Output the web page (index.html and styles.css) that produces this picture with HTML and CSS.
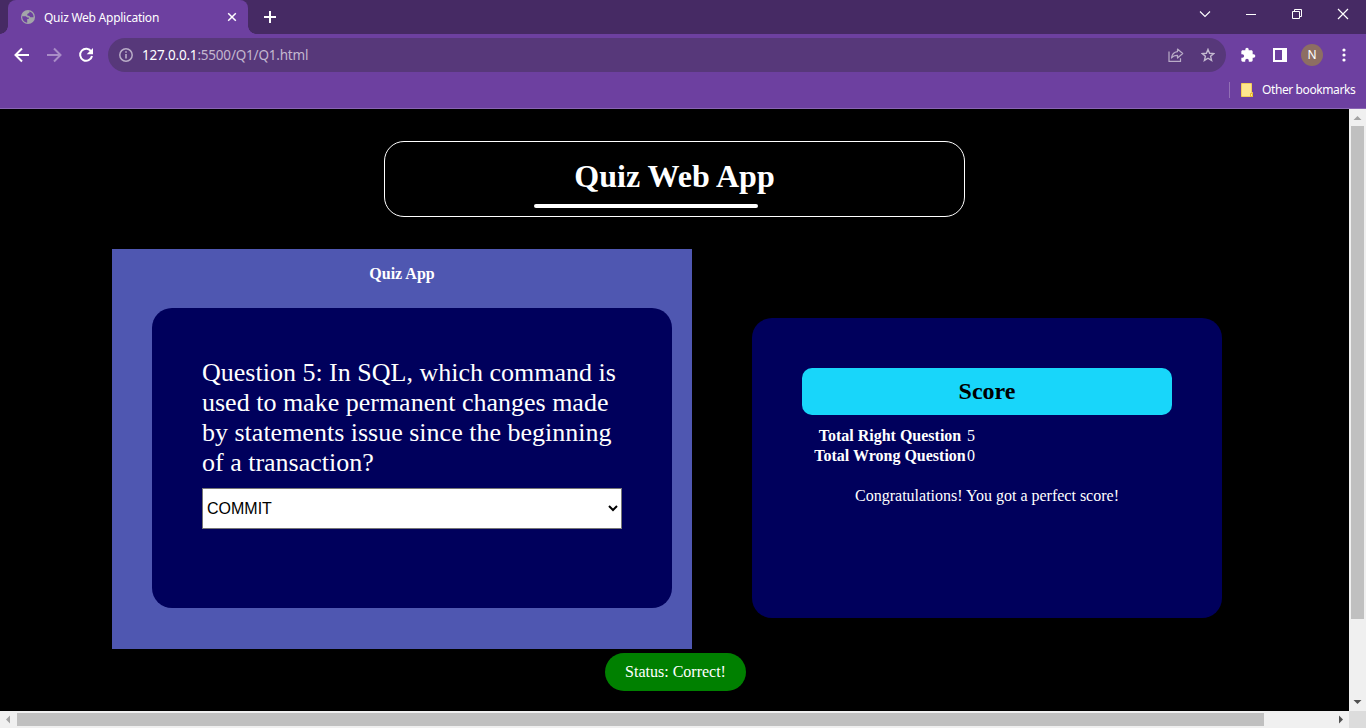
FILE: index.html
```html
<!DOCTYPE html>
<html lang="en">
<head>
<meta charset="utf-8">
<title>Quiz Web Application</title>
<link rel="stylesheet" href="styles.css">
</head>
<body>
<div class="window">
  <header class="browser">
    <div class="tabstrip">
      <div class="tab">
        <svg class="globe" width="14" height="14" viewBox="0 0 14 14"><circle cx="7" cy="7" r="7" fill="#a3a6a9"/><path d="M1.200 6.300h3.600l1.500 1.300h1.500v1.300H6.200v3.900C3.200 12.300 1 9.900 1.200 6.300zM8.400 1.400v1.400L6.300 4v1.500l2 .5 1 1.300h3.300C12.800 4.300 11 2 8.400 1.400z" fill="#6d40a0"/></svg>
        <span class="tab-title">Quiz Web Application</span>
        <svg class="tab-close" width="10" height="10" viewBox="0 0 10 10"><path d="M1.200 1.200l7.600 7.600M8.800 1.200l-7.600 7.600" stroke="#fff" stroke-width="1.500"/></svg>
      </div>
      <svg class="new-tab" width="12" height="12" viewBox="0 0 12 12"><path d="M6 0v12M0 6h12" stroke="#fff" stroke-width="2"/></svg>
      <div class="controls">
        <svg width="12" height="12" viewBox="0 0 12 12"><path d="M1 3.500l5 5 5-5" fill="none" stroke="#fff" stroke-width="1.100"/></svg>
        <svg width="12" height="12" viewBox="0 0 12 12"><path d="M1 6.500h10" stroke="#fff"/></svg>
        <svg width="12" height="12" viewBox="0 0 12 12"><path d="M1.500 3.500h7v7h-7zM3.500 3.500v-2h7v7h-2" fill="none" stroke="#fff"/></svg>
        <svg width="12" height="12" viewBox="0 0 12 12"><path d="M1 1l10 10M11 1L1 11" stroke="#fff" stroke-width="1.200"/></svg>
      </div>
    </div>
    <div class="toolbar">
      <svg class="nav" width="16" height="16" viewBox="0 0 16 16"><path d="M15 8H2M8 1.500L1.500 8 8 14.500" fill="none" stroke="#fff" stroke-width="2"/></svg>
      <svg class="nav" width="16" height="16" viewBox="0 0 16 16"><path d="M1 8h13M8 1.500L14.500 8 8 14.500" fill="none" stroke="#a98cc7" stroke-width="2"/></svg>
      <svg class="nav" width="16" height="16" viewBox="0 0 16 16"><path d="M13.300 4.700A6 6 0 1 0 14 9" fill="none" stroke="#fff" stroke-width="2"/><path d="M15 1v6.300H8.700z" fill="#fff"/></svg>
      <div class="omnibox">
        <svg width="14" height="14" viewBox="0 0 14 14"><circle cx="7" cy="7" r="6.200" fill="none" stroke="#b9acc7" stroke-width="1.500"/><path d="M7 6v4.500M7 3.300v1.500" stroke="#b9acc7" stroke-width="1.600"/></svg>
        <span class="url"><b>127.0.0.1</b>:5500/Q1/Q1.html</span>
        <svg class="share" width="16" height="14" viewBox="0 0 16 14"><path d="M1 3.500v9.800h11.500v-3" fill="none" stroke="#b9acc7" stroke-width="1.200"/><path d="M9.500 1l5.200 4.500L9.500 10V7.300C6.500 7.200 5 8 3.500 10 4 6 6 4 9.500 3.600z" fill="none" stroke="#b9acc7" stroke-width="1.200" stroke-linejoin="round"/></svg>
        <svg width="14" height="14" viewBox="0 0 14 14"><path d="M7 1.400l1.600 3.900 4.200.3-3.200 2.700 1 4.100L7 10.200l-3.600 2.200 1-4.100L1.200 5.600l4.200-.3z" fill="none" stroke="#c4b9d0" stroke-width="1.400"/></svg>
      </div>
      <svg class="puzzle" width="16" height="16" viewBox="0 0 24 24"><path fill="#fff" d="M20.500 11H19V7c0-1.100-.9-2-2-2h-4V3.500a2.500 2.500 0 0 0-5 0V5H4c-1.100 0-2 .9-2 2v3.800h1.500a2.700 2.700 0 0 1 0 5.400H2V20c0 1.100.9 2 2 2h3.800v-1.500a2.700 2.700 0 0 1 5.400 0V22H17c1.100 0 2-.9 2-2v-4h1.500a2.500 2.500 0 0 0 0-5z"/></svg>
      <svg class="panel" width="14" height="14" viewBox="0 0 14 14"><path fill="#fff" fill-rule="evenodd" d="M0 0h14v14H0zM2 2v10h7V2z"/></svg>
      <span class="avatar">N</span>
      <svg class="menu" width="4" height="14" viewBox="0 0 4 14"><circle cx="2" cy="2" r="1.600" fill="#fff"/><circle cx="2" cy="7" r="1.600" fill="#fff"/><circle cx="2" cy="12" r="1.600" fill="#fff"/></svg>
    </div>
    <div class="bookmarks">
      <svg width="12" height="14" viewBox="0 0 12 14"><path d="M.5.5h10v9h1v4H.5z" fill="#ffe78f" stroke="#f4cf58"/><path d="M9.500 13.500v-3h2v3z" fill="#ffe78f" stroke="#e9bb2d"/></svg>
      <span>Other bookmarks</span>
    </div>
  </header>
  <div class="viewport">
    <main class="page">
      <div class="banner"><h1>Quiz Web App</h1><div class="rule"></div></div>
      <div class="columns">
        <section class="quiz">
          <h2>Quiz App</h2>
          <div class="question">
            <p>Question 5: In SQL, which command is<br>used to make permanent changes made<br>by statements issue since the beginning<br>of a transaction?</p>
            <select><option>COMMIT</option></select>
          </div>
        </section>
        <section class="score">
          <h3>Score</h3>
          <div class="totals">
            <b class="right">Total Right Question</b><span>5</span>
            <b class="wrong">Total Wrong Question</b><span>0</span>
          </div>
          <p class="message">Congratulations! You got a perfect score!</p>
        </section>
      </div>
      <div class="status">Status: Correct!</div>
    </main>
    <div class="vbar">
      <svg width="17" height="17" viewBox="0 0 17 17"><path d="M4.500 11h8L8.500 7z" fill="#a3a3a3"/></svg>
      <div class="vthumb"></div>
      <svg width="17" height="17" viewBox="0 0 17 17"><path d="M4.500 6h8l-4 4z" fill="#505050"/></svg>
    </div>
    <div class="hbar">
      <svg width="17" height="17" viewBox="0 0 17 17"><path d="M10 4.500v8l-4-4z" fill="#a3a3a3"/></svg>
      <div class="hthumb"></div>
      <svg width="17" height="17" viewBox="0 0 17 17"><path d="M7 4.500v8l4-4z" fill="#505050"/></svg>
    </div>
    <div class="corner"></div>
  </div>
</div>
</body>
</html>
```
FILE: styles.css
```css
* { box-sizing: border-box; }
body { margin: 0; background: #000; overflow: hidden; }
svg { display: block; flex: none; }
.window { width: 1366px; height: 728px; display: flex; flex-direction: column; }

.browser { height: 109px; background: #6d40a0; border-bottom: 1px solid #8a66b3; font-family: "Noto Sans", "Open Sans", sans-serif; color: #fff; white-space: nowrap; }
.tabstrip { height: 34px; background: #462a64; display: flex; padding-left: 8px; }
.tab { width: 240px; height: 34px; background: #6d40a0; border-radius: 8px 8px 0 0; display: flex; align-items: center; padding: 0 11px 0 13px; position: relative; }
.tab::before, .tab::after { content: ""; position: absolute; bottom: 0; width: 8px; height: 8px; }
.tab::before { left: -8px; background: radial-gradient(circle at 0 0, #462a64 7.5px, #6d40a0 8px); }
.tab::after { right: -8px; background: radial-gradient(circle at 100% 0, #462a64 7.5px, #6d40a0 8px); }
.tab-title { font-size: 12px; letter-spacing: -.25px; margin-left: 9px; flex: 1; }
.new-tab { margin: 11px 0 0 16px; }
.controls { margin-left: auto; display: flex; gap: 34px; padding: 8px 17px 0 0; }

.toolbar { height: 42px; display: flex; align-items: center; padding-left: 14px; }
.nav { margin-right: 16px; }
.nav:nth-child(3) { margin-right: 14px; }
.omnibox { width: 1118px; height: 34px; border-radius: 17px; background: #57387a; display: flex; align-items: center; padding: 0 11px; }
.url { margin-left: 9px; font-size: 13.5px; color: #c3b7cf; letter-spacing: -.2px; }
.url b { font-weight: 400; color: #fff; }
.share { margin: 0 17px 0 auto; }
.puzzle { margin-left: 14px; }
.panel { margin-left: 17px; }
.avatar { width: 22px; height: 22px; margin-left: 14px; border-radius: 50%; background: #8d6e63; font-size: 12px; line-height: 22px; text-align: center; }
.menu { margin-left: 19px; }
.bookmarks { width: 137px; height: 28px; margin-left: auto; display: flex; align-items: center; padding-left: 12px; background: linear-gradient(#9270b5, #9270b5) 0 6px / 1px 16px no-repeat; font-size: 12px; }
.bookmarks span { margin: -1px 0 0 9px; letter-spacing: -.4px; }

.viewport { flex: 1; display: grid; grid-template-columns: 1349px 17px; grid-template-rows: 602px 17px; }
.page { background: #000; color: #fff; font-family: "Liberation Serif", "Times New Roman", serif; font-size: 16px; padding-top: 32px; overflow: hidden; }
.banner { width: 581px; height: 76px; margin: 0 auto; border: 1px solid #fff; border-radius: 20px; padding-top: 16px; }
.banner h1 { margin: 0; font-size: 32px; line-height: 36px; text-align: center; }
.rule { width: 224px; height: 4px; margin: 10px 0 0 149px; border-radius: 2px; background: #fff; }
.columns { display: flex; align-items: flex-start; margin: 32px 0 0 112px; }
.quiz { width: 580px; height: 400px; background: #4f57b1; padding: 16px 20px 0 40px; }
.quiz h2 { margin: 0 0 0 -20px; font-size: 16px; line-height: 18px; text-align: center; }
.question { width: 520px; height: 300px; margin-top: 25px; padding: 50px; border-radius: 20px; background: #00005c; }
.question p { margin: 0; font-size: 26px; line-height: 30px; white-space: nowrap; }
.question select { display: block; width: 420px; height: 41px; margin-top: 10px; padding: 0; border: 1px solid #767676; border-radius: 0; background-color: #fff; color: #000; font: 16px "Liberation Sans", Arial, sans-serif; }
.score { width: 470px; height: 300px; margin: 69px 0 0 60px; padding: 50px; border-radius: 20px; background: #00005c; }
.score h3 { margin: 0; height: 47px; border-radius: 10px; background: #18d6fa; color: #000; font-size: 24px; line-height: 47px; text-align: center; }
.totals { display: grid; grid-template-columns: 152px 10px; column-gap: 1px; grid-auto-rows: 20px; line-height: 20px; margin: 11px 0 0 12px; white-space: nowrap; font-size: 16px; }
.totals b { text-align: center; }
.message { margin: 20px 0 0; line-height: 20px; text-align: center; font-size: 16px; }
.status { width: 141px; height: 38px; margin: 4px 603px 0 605px; border-radius: 20px; background: green; line-height: 38px; text-align: center; font-size: 16px; }

.vbar { background: #f0f0f0; display: flex; flex-direction: column; }
.vthumb { width: 13px; height: 493px; margin: 0 2px auto; background: #c0c0c0; }
.hbar { background: #f0f0f0; display: flex; }
.hthumb { width: 1247px; height: 13px; margin: 2px auto 2px 0; background: #c0c0c0; }
.corner { background: #dcdcdc; }
```
